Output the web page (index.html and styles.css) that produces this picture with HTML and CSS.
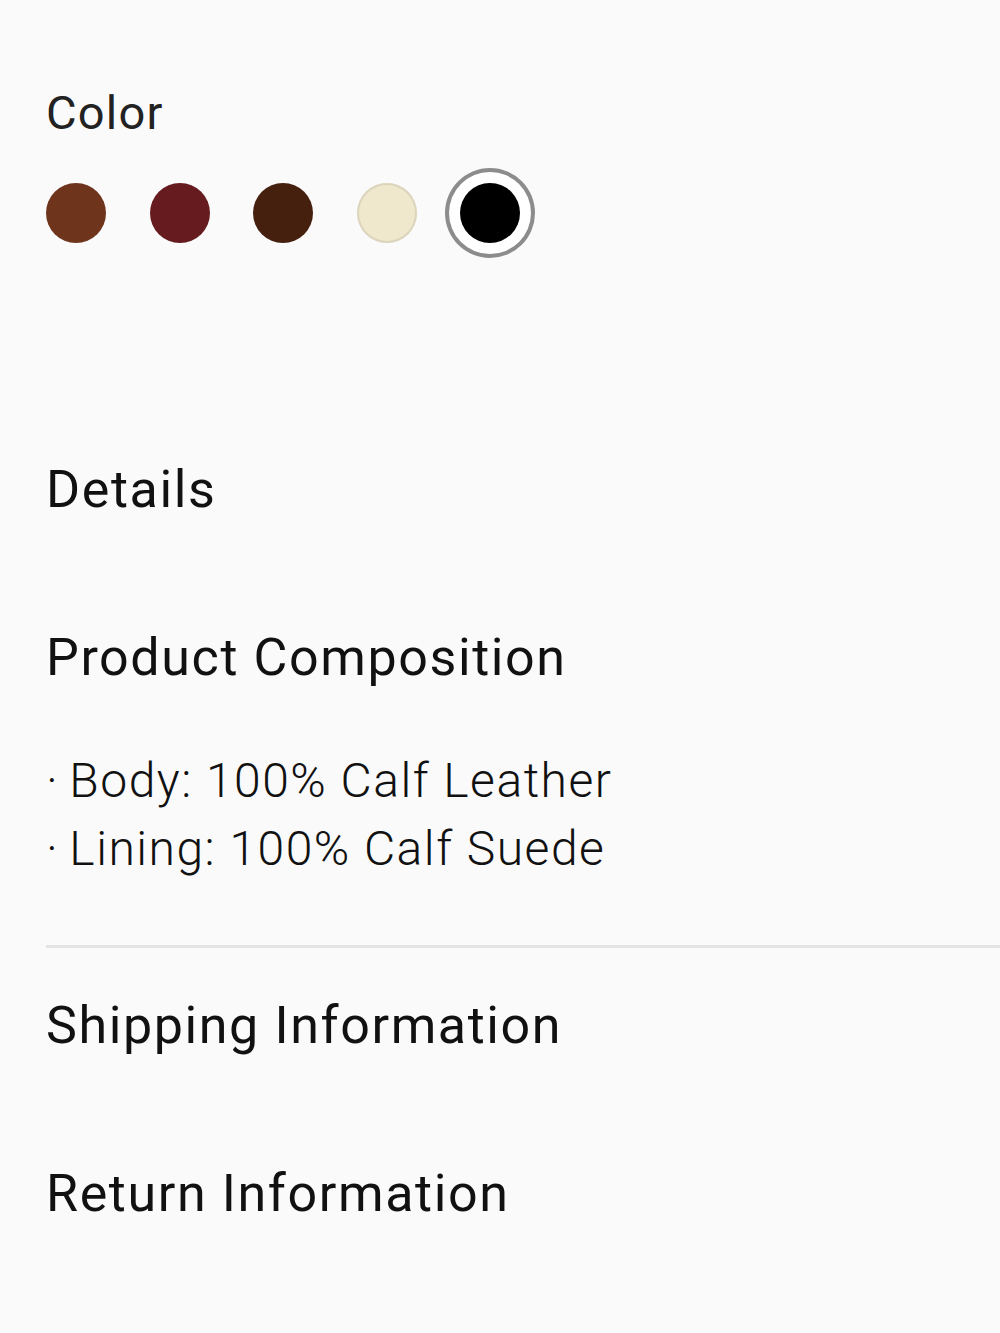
FILE: index.html
```html
<!DOCTYPE html>
<html lang="en">
<head>
    <meta charset="UTF-8">
    <meta name="viewport" content="width=device-width, initial-scale=1.0">
    <title>Product Details</title>
    <link rel="stylesheet" href="styles.css">
</head>
<body>
    <div class="panel">
        <section class="color-picker">
            <h3 class="label">Color</h3>
            <div class="swatches">
                <span class="swatch" style="background: #6f351c;"></span>
                <span class="swatch" style="background: #661b1f;"></span>
                <span class="swatch" style="background: #45200f;"></span>
                <span class="swatch light" style="background: #f0e8cd;"></span>
                <span class="swatch selected" style="background: #000;"></span>
            </div>
        </section>

        <section class="details">
            <h2 class="heading">Details</h2>
            <h2 class="heading sub">Product Composition</h2>
            <ul class="composition">
                <li>Body: 100% Calf Leather</li>
                <li>Lining: 100% Calf Suede</li>
            </ul>
        </section>

        <div class="info-list">
            <h2 class="heading">Shipping Information</h2>
            <h2 class="heading">Return Information</h2>
        </div>
    </div>
</body>
</html>
```

FILE: styles.css
```css
body {
    margin: 0;
    padding: 0;
    background: #fafafa;
    font-family: 'Roboto', 'Liberation Sans', sans-serif;
    color: #111;
}

.panel {
    padding: 78px 0 60px 46px;
}

.label {
    margin: 0;
    font-size: 47px;
    font-weight: 400;
    line-height: 70px;
    letter-spacing: 1.2px;
    color: #222;
}

.swatches {
    display: flex;
    gap: 43.5px;
    margin-top: 35px;
}

.swatch {
    width: 60px;
    height: 60px;
    border-radius: 50%;
    display: block;
}

.swatch.light {
    box-shadow: inset 0 0 0 2px #dcd5bd;
}

.swatch.selected {
    box-shadow: 0 0 0 11px #fff, 0 0 0 15px #8c8c8c;
}

.details {
    margin-top: 212px;
}

.heading {
    margin: 0;
    font-size: 52px;
    font-weight: 400;
    line-height: 70px;
    letter-spacing: 1.6px;
}

.heading.sub {
    margin-top: 98px;
}

.composition {
    list-style: none;
    margin: 54px 0 0 0;
    padding: 0;
    font-size: 48px;
    font-weight: 300;
    line-height: 68px;
    letter-spacing: 1.5px;
}

.composition li::before {
    content: "\00B7";
    margin-right: 10px;
}

.info-list {
    border-top: 3px solid #e3e3e3;
    margin-top: 62px;
    padding-top: 43px;
    display: flex;
    flex-direction: column;
    gap: 98px;
}
```
